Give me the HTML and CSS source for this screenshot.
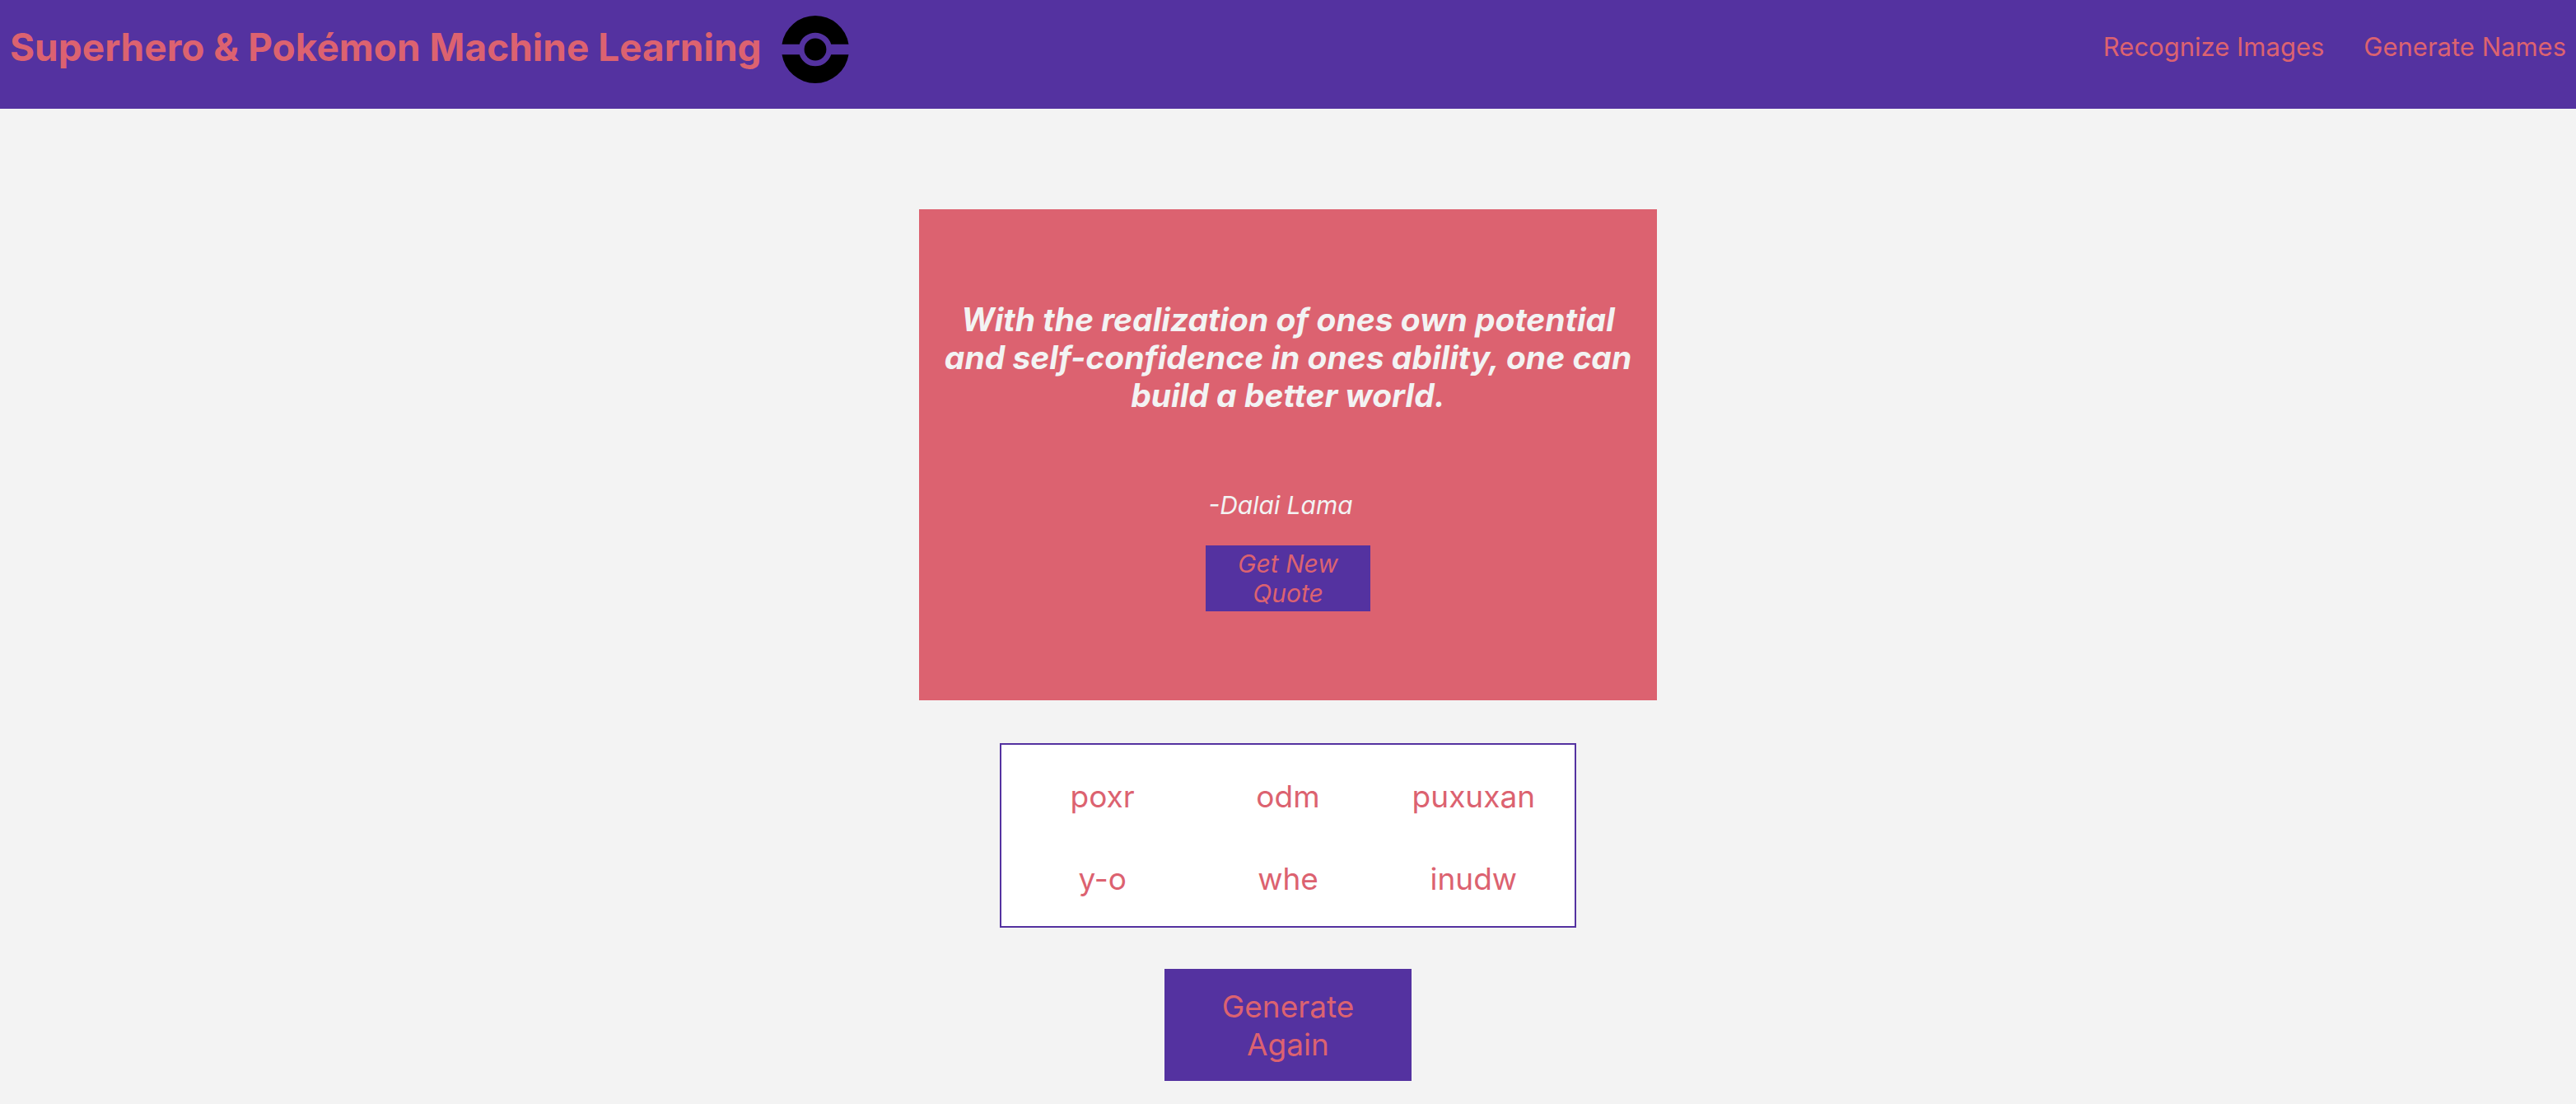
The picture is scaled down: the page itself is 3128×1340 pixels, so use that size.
FILE: index.html
```
<!DOCTYPE html>
<html lang="en">
<head>
  <meta charset="utf-8">
  <meta name="viewport" content="width=device-width, initial-scale=1">
  <title>Superhero &amp; Pokémon Machine Learning</title>
  <link rel="stylesheet" href="styles.css">
</head>
<body>
  <header class="header">
    <h1 class="title">Superhero &amp; Pokémon Machine Learning</h1>
    <svg class="logo" viewBox="0 0 88 88" aria-hidden="true">
      <path d="M3.5 37.7A41 41 0 0 1 84.5 37.7H63.2A20.2 20.2 0 0 0 24.8 37.7Z"/>
      <path d="M3.5 50.3A41 41 0 0 0 84.5 50.3H63.2A20.2 20.2 0 0 1 24.8 50.3Z"/>
      <circle cx="44" cy="44" r="13.4"/>
    </svg>
    <nav class="nav">
      <a class="nav-link" href="#recognize">Recognize Images</a>
      <a class="nav-link" href="#generate">Generate Names</a>
    </nav>
  </header>
  <main class="main">
    <section class="quote-card">
      <h2 class="quote">With the realization of ones own potential and self-confidence in ones ability, one can build a better world.</h2>
      <p class="author">-Dalai Lama</p>
      <button class="quote-button" type="button">Get New Quote</button>
    </section>
    <ul class="names">
      <li>poxr</li>
      <li>odm</li>
      <li>puxuxan</li>
      <li>y-o</li>
      <li>whe</li>
      <li>inudw</li>
    </ul>
    <button class="generate-button" type="button">Generate Again</button>
  </main>
</body>
</html>
```
FILE: styles.css
```
:root {
  --purple: #5432a0;
  --coral: #dc6270;
  --light: #f3f3f3;
}

* {
  box-sizing: border-box;
}

body {
  margin: 0;
  background: var(--light);
  color: var(--coral);
  font-family: Inter, "Liberation Sans", sans-serif;
}

.header {
  display: flex;
  align-items: flex-start;
  padding: 16px 12px 28px;
  background: var(--purple);
}

.title {
  margin: 0;
  font-size: 46px;
  font-weight: 700;
  line-height: 82px;
}

.logo {
  width: 88px;
  height: 88px;
  margin-left: 21px;
}

.nav {
  display: flex;
  gap: 48px;
  margin-left: auto;
}

.nav-link {
  color: inherit;
  font-size: 31px;
  line-height: 82px;
  text-decoration: none;
}

.main {
  display: flex;
  flex-direction: column;
  align-items: center;
  padding: 122px 24px 28px;
}

.quote-card {
  display: flex;
  flex-direction: column;
  align-items: center;
  width: 100%;
  max-width: 896px;
  padding: 111px 24px 108px;
  background: var(--coral);
  color: var(--light);
  font-style: italic;
  text-align: center;
}

.quote {
  margin: 0;
  font-size: 39px;
  font-weight: 700;
  line-height: 46px;
}

.author {
  margin: 90px 0 29px;
  padding-right: 18px;
  font-size: 30px;
  line-height: 40px;
}

.quote-button,
.generate-button {
  border: 0;
  background: var(--purple);
  color: var(--coral);
  font-family: inherit;
  cursor: pointer;
}

.quote-button {
  width: 200px;
  padding: 4px 32px;
  font-size: 30px;
  font-style: italic;
  line-height: 36px;
}

.names {
  display: grid;
  grid-template-columns: repeat(3, 1fr);
  width: 100%;
  max-width: 700px;
  margin: 52px 0 50px;
  padding: 13px 10px 7px;
  border: 2px solid var(--purple);
  background: #fff;
  font-size: 37px;
  line-height: 100px;
  list-style: none;
  text-align: center;
}

.generate-button {
  width: 300px;
  padding: 23px 60px 21px;
  font-size: 37px;
  line-height: 46px;
}
```
